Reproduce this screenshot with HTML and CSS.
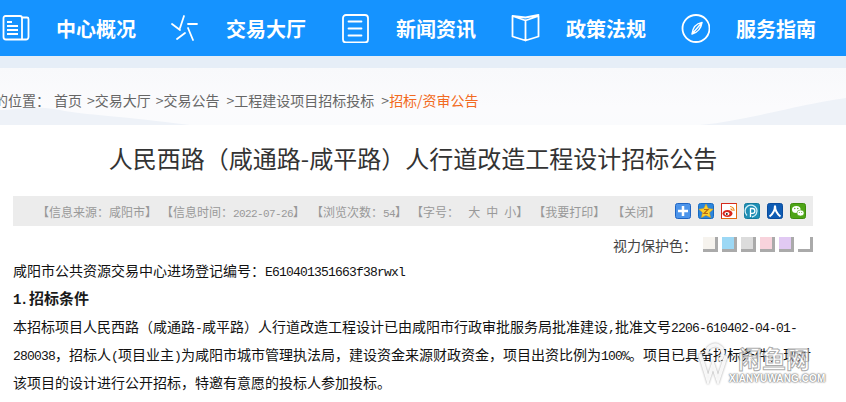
FILE: index.html
```html
<!DOCTYPE html>
<html lang="zh-CN">
<head>
<meta charset="utf-8">
<title>招标公告</title>
<link rel="stylesheet" href="styles.css">
</head>
<body>
<nav class="nav">
  <a class="nav-item">
    <svg class="nav-icon" viewBox="0 0 30 30"><path d="M22 4.500h5a1.500 1.500 0 0 1 1.500 1.500v18a2.500 2.500 0 0 1-2.500 2.500H6a2.500 2.500 0 0 1-2.500-2.500V5A2 2 0 0 1 5.500 3H20a2 2 0 0 1 2 2v21"/><path d="M7 9h5M7 13h11M7 17h11M7 21h11" class="thick"/></svg>
    <span>中心概况</span>
  </a>
  <a class="nav-item">
    <svg class="nav-icon" viewBox="0 0 30 30"><path d="M14 3l-4 12M18 11h9M2 11l8 6M7 26l8-6M18 15l5 12"/></svg>
    <span>交易大厅</span>
  </a>
  <a class="nav-item">
    <svg class="nav-icon" viewBox="0 0 30 30"><rect x="3" y="2" width="25" height="27.500" rx="3"/><path d="M8.500 8.500h13M8.500 15.500h13M8.500 22.500h13"/></svg>
    <span>新闻资讯</span>
  </a>
  <a class="nav-item">
    <svg class="nav-icon" viewBox="0 0 30 30"><path d="M15.500 7.500L2.500 3v20.500l13 4 13-4V3zM15.500 7.500v20M2.500 3l13 1.500L28.500 2"/></svg>
    <span>政策法规</span>
  </a>
  <a class="nav-item">
    <svg class="nav-icon" viewBox="0 0 30 30"><circle cx="16" cy="15.500" r="13.500"/><path d="M22 9.500c-5.500 1-9 3.500-10 11.500 5.500-1.500 9-5 10-11.500zM12 21l10-11.500" class="thin"/></svg>
    <span>服务指南</span>
  </a>
</nav>
<div class="strip"></div>
<header class="crumb-band">
  <svg class="hills" viewBox="0 0 846 57" preserveAspectRatio="none"><path d="M0 42C15 42 35 37 60 42S120 48 190 57H0zM700 57C750 52 800 36 846 30V57z"/></svg>
  <div class="crumbs"><span>您的位置：</span><span class="crumb-first">首页</span><span class="crumb-sep">&gt;</span>交易大厅<span class="crumb-sep">&gt;</span>交易公告<span class="crumb-sep crumb-wide">&gt;</span>工程建设项目招标投标<span class="crumb-sep crumb-wide">&gt;</span><span class="current">招标/资审公告</span></div>
</header>
<main class="article">
  <h1 class="title">人民西路（咸通路-咸平路）人行道改造工程设计招标公告</h1>
  <div class="meta">
    <div class="meta-text">
      <span>【信息来源：咸阳市】</span>
      <span>【信息时间：<b class="num">2022-07-26</b>】</span>
      <span class="views">【浏览次数：<b class="num">54</b>】</span>
      <span class="font-size">【字号：<i>大</i><i>中</i><i>小</i>】</span>
      <span class="print">【我要打印】</span>
      <span class="close">【关闭】</span>
    </div>
    <div class="share">
      <svg viewBox="0 0 16 16"><rect x=".5" y=".5" width="15" height="15" rx="2" fill="#4c94ea" stroke="#1f64c2"/><path d="M8 3v10M3 8h10" stroke="#fff" stroke-width="2.500"/></svg>
      <svg viewBox="0 0 16 16"><rect x=".5" y=".5" width="15" height="15" rx="2" fill="#2b86dc" stroke="#1669c0"/><path d="M8 1l2.200 4.600 5 .6-3.700 3.400 1 5L8 12.200 3.500 14.600l1-5L.8 6.200l5-.6z" fill="#fbd12d" stroke="#e79a11" stroke-width=".5"/><path d="M6 6.500h4L6 10.500h4" fill="none" stroke="#b86b12" stroke-width="1.200"/></svg>
      <svg viewBox="0 0 16 16"><rect x=".5" y=".5" width="15" height="15" fill="#fff" stroke="#e36a10"/><path d="M.5 15.500v-15h15" fill="none" stroke="#d5281c"/><ellipse cx="6.500" cy="10.500" rx="5" ry="3.500" fill="#d8281e"/><ellipse cx="6" cy="10.800" rx="2.500" ry="1.800" fill="#fff"/><circle cx="5.800" cy="11" r="1" fill="#222"/><path d="M9 3.500a4 4 0 0 1 4 4.500M9.500 5.800a2 2 0 0 1 1.800 2" fill="none" stroke="#ee8a1c" stroke-width="1.200"/></svg>
      <svg viewBox="0 0 16 16"><rect x=".5" y=".5" width="15" height="15" rx="2" fill="#1f8fb5" stroke="#147b9d"/><path d="M3 12.500a6 6 0 1 1 5 1.500" fill="none" stroke="#d5f0f8" stroke-width="1.300"/><path d="M6.500 14V5.500h2a2.300 2.300 0 0 1 0 4.800H7" fill="none" stroke="#fff" stroke-width="1.300"/></svg>
      <svg viewBox="0 0 16 16"><rect x=".5" y=".5" width="15" height="15" rx="2" fill="#0e5cb4" stroke="#0a4c9d"/><path d="M8 2.500c0 5-1.500 8-5.500 11M8 2.500c0 5 1.500 8 5.500 11" fill="none" stroke="#fff" stroke-width="2"/></svg>
      <svg viewBox="0 0 16 16"><rect x=".5" y=".5" width="15" height="15" rx="2" fill="#4ea516" stroke="#3d8c0d"/><ellipse cx="6.300" cy="6.500" rx="4.300" ry="3.500" fill="#fff"/><ellipse cx="10.500" cy="10" rx="3.600" ry="3" fill="#fff" stroke="#4ea516" stroke-width=".6"/><circle cx="4.800" cy="5.500" r=".7" fill="#4ea516"/><circle cx="7.800" cy="5.500" r=".7" fill="#4ea516"/><circle cx="9.300" cy="9.500" r=".5" fill="#4ea516"/><circle cx="11.700" cy="9.500" r=".5" fill="#4ea516"/></svg>
    </div>
  </div>
  <div class="eye-row">
    <span class="eye-label">视力保护色：</span>
    <span class="swatch s1"></span>
    <span class="swatch s2"></span>
    <span class="swatch s3"></span>
    <span class="swatch s4"></span>
    <span class="swatch s5"></span>
    <span class="swatch s6"></span>
  </div>
  <div class="body-text">
    <p>咸阳市公共资源交易中心进场登记编号：<span class="lat">E610401351663f38rwxl</span></p>
    <p class="heading"><span class="lat">1.</span>招标条件</p>
    <p>本招标项目人民西路（咸通路<span class="lat">-</span>咸平路）人行道改造工程设计已由咸阳市行政审批服务局批准建设<span class="lat">,</span>批准文号<span class="lat">2206-610402-04-01-</span><br><span class="lat">280038</span>，招标人<span class="lat">(</span>项目业主<span class="lat">)</span>为咸阳市城市管理执法局，建设资金来源财政资金，项目出资比例为<span class="lat">100%</span>。项目已具备招标条件，现对<br>该项目的设计进行公开招标，特邀有意愿的投标人参加投标。</p>
  </div>
</main>
<aside class="watermark">
  <svg class="wm-logo" viewBox="0 0 30 42"><path d="M2 12l8 26 5-15 5 15 8-24"/><path d="M9 12a8 8 0 1 1 12 6"/></svg>
  <div class="wm-name">闲鱼网</div>
  <div class="wm-url">XIANYUWANG.COM</div>
</aside>
</body>
</html>
```
FILE: styles.css
```css
* { box-sizing: border-box; }
html, body { margin: 0; padding: 0; }
body {
  position: relative;
  width: 846px;
  height: 402px;
  overflow: hidden;
  background: #fff;
  font-family: "Noto Sans CJK SC", "Liberation Sans", sans-serif;
  color: #222;
}
.nav {
  display: flex;
  height: 56px;
  background: #1593ff;
  color: #fff;
}
.nav-item {
  display: flex;
  align-items: center;
  flex: 0 0 170px;
  gap: 26px;
  font-size: 20px;
  font-weight: 700;
}
.nav-icon {
  width: 30px;
  height: 30px;
  fill: none;
  stroke: #fff;
  stroke-width: 1.800;
  stroke-linecap: round;
  stroke-linejoin: round;
}
.nav-icon .thick { stroke-width: 2; stroke-linecap: butt; }
.nav-icon .thin { stroke-width: 1.500; }
.strip { height: 12px; background: #e6eef7; }
.crumb-band {
  position: relative;
  height: 57px;
  padding-top: 21px;
  background: linear-gradient(#f8f9fb, #fbfbfd 70%, #fafbfd);
}
.hills {
  position: absolute;
  left: 0;
  top: 0;
  width: 846px;
  height: 57px;
  fill: #eef2f8;
}
.crumbs {
  position: relative;
  margin-left: -20px;
  font-size: 14px;
  line-height: 22px;
  color: #666;
  white-space: nowrap;
}
.crumb-first { margin-left: 4px; }
.crumb-sep { margin-left: 5px; }
.crumb-wide { margin-left: 7px; }
.current { color: #f26a21; }
.article { padding: 0 33px 0 13px; }
.title {
  margin: 16px 0 21px;
  font-size: 24px;
  line-height: 34px;
  font-weight: 400;
  text-align: center;
  color: #333;
}
.meta {
  display: flex;
  justify-content: space-between;
  align-items: center;
  height: 30px;
  padding: 0 0 0 24px;
  background: #ececec;
  color: #999;
  font-size: 12px;
}
.meta-text { display: flex; gap: 4px; white-space: nowrap; }
.meta-text span { flex: none; }
.meta-text .views { margin-left: 2px; }
.meta-text .print { margin-left: 1px; }
.meta-text .close { margin-left: 3px; }
.num {
  font-family: "Liberation Mono", monospace;
  font-size: 11px;
  letter-spacing: -.6px;
  font-weight: 400;
  line-height: 1;
}
.font-size i { font-style: normal; margin-left: 6px; }
.font-size i:first-child { margin-left: 9px; }
.share { display: flex; gap: 7px; padding-right: 7px; }
.share svg { display: block; width: 16px; height: 16px; }
.eye-row {
  display: flex;
  justify-content: flex-end;
  align-items: center;
  gap: 4px;
  height: 18px;
  margin-top: 10px;
}
.eye-label { font-size: 14px; color: #444; margin-right: 2px; }
.swatch {
  width: 15px;
  height: 15px;
  margin-top: -1px;
  box-shadow: inset -3px -3px 0 #aaa;
}
.s1 { background: #f6f3ee; }
.s2 { background: #9cd8f5; }
.s3 { background: #dcdcdc; }
.s4 { background: #f8d3dc; }
.s5 { background: #e1c9f3; }
.s6 { background: #fff; }
.body-text {
  margin-top: 2px;
  font-size: 14px;
  line-height: 28px;
  color: #111;
  white-space: nowrap;
}
.body-text p { margin: 0; }
.lat {
  font-family: "Liberation Mono", monospace;
  font-size: 13px;
  letter-spacing: -.8px;
  line-height: 1;
}
.heading { font-size: 15px; font-weight: 700; color: #1a1a1a; }
.heading .lat { margin-right: 2px; font-size: 14px; letter-spacing: -1.400px; }
.watermark {
  position: absolute;
  left: 698px;
  top: 342px;
  width: 132px;
  height: 42px;
  pointer-events: none;
}
.wm-logo {
  position: absolute;
  left: 0;
  top: 0;
  width: 30px;
  height: 42px;
  fill: none;
  stroke: rgba(255, 255, 255, .9);
  stroke-width: 3.500;
  filter: drop-shadow(0 0 1px #999);
}
.wm-name {
  position: absolute;
  left: 40px;
  top: 0;
  font-size: 24px;
  line-height: 32px;
  font-weight: 700;
  color: rgba(255, 255, 255, .75);
  -webkit-text-stroke: 1px rgba(150, 150, 150, .8);
}
.wm-url {
  position: absolute;
  left: 31px;
  top: 32px;
  font-family: "Liberation Sans", sans-serif;
  font-size: 10px;
  line-height: 9px;
  font-weight: 700;
  letter-spacing: .1px;
  color: #fff;
  text-shadow: 0 0 1px #777, 0 0 2px #888, 0 0 2px #888;
}
```
